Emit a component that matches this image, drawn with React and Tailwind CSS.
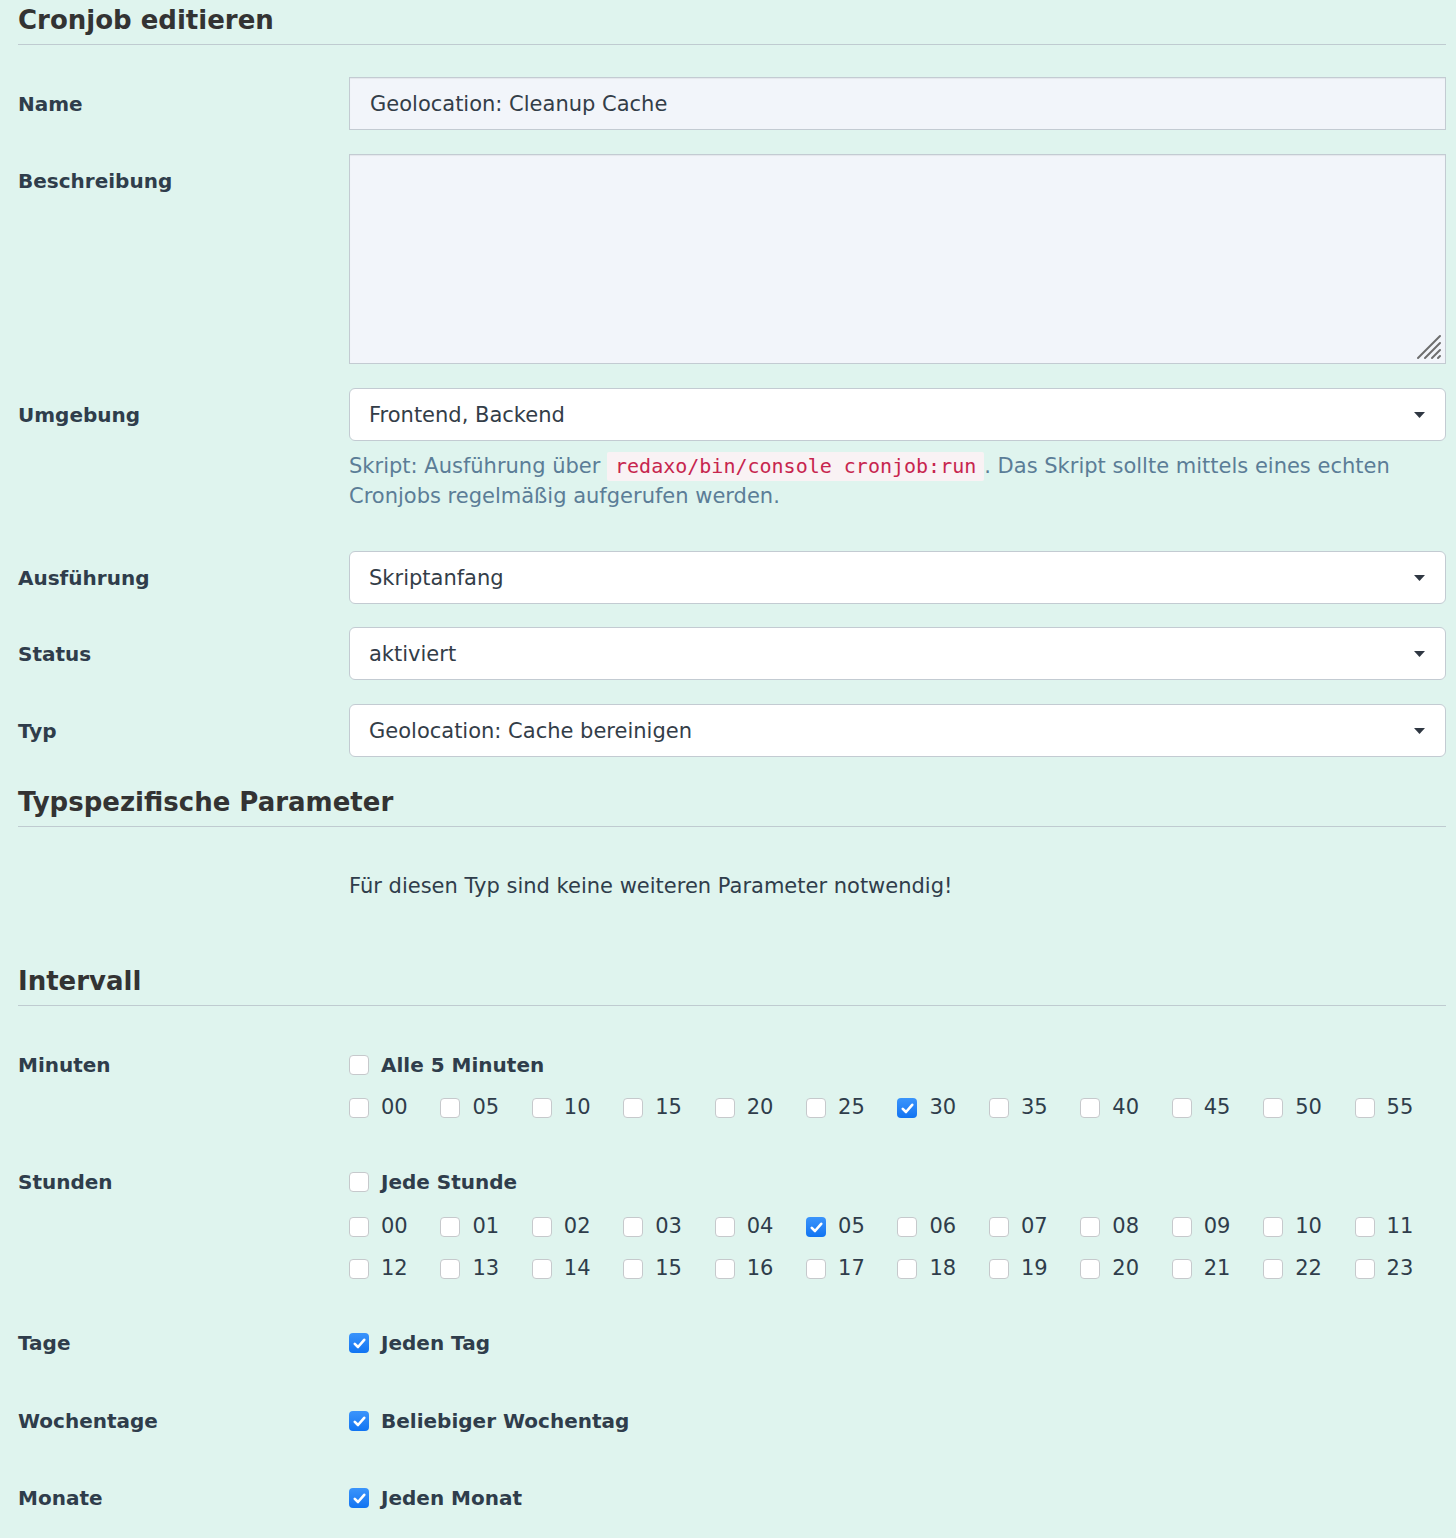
import React from 'react';

const font = { fontFamily: '"DejaVu Sans", Verdana, sans-serif' };

function Caret() {
  return (
    <svg width="11" height="6" viewBox="0 0 11 6" className="shrink-0">
      <path d="M0 0 L11 0 L5.5 6 Z" fill="#2f3742" />
    </svg>
  );
}

function Checkbox({ checked }) {
  if (checked) {
    return (
      <span className="w-[20px] h-[20px] shrink-0 rounded-[4px] bg-gradient-to-b from-[#3a94fb] to-[#0f74f2] flex items-center justify-center">
        <svg width="13" height="11" viewBox="0 0 13 11">
          <path d="M1.8 5.8 L5 9 L11.2 1.8" fill="none" stroke="white" strokeWidth="2.6" strokeLinecap="round" strokeLinejoin="round" />
        </svg>
      </span>
    );
  }
  return <span className="w-[20px] h-[20px] shrink-0 rounded-[4px] bg-white border border-[#c6c9cc]" />;
}

function Check({ label, checked, bold }) {
  return (
    <label className="flex items-center gap-[12px] h-[30px]">
      <Checkbox checked={checked} />
      <span className={bold ? 'text-[20px] font-bold text-[#2f3d4b]' : 'text-[21px] text-[#2f3d4b]'}>{label}</span>
    </label>
  );
}

function Label({ children, className = '' }) {
  return (
    <div className={`w-[331px] shrink-0 text-[20px] font-bold text-[#2f3d4b] ${className}`}>{children}</div>
  );
}

function Select({ value, className = 'flex-1' }) {
  return (
    <div className={`${className} h-[53px] shrink-0 bg-white border border-[#c3cbd2] rounded-[6px] flex items-center justify-between pl-[19px] pr-[20px] text-[21px] text-[#333d48]`}>
      <span className="pt-[2px]">{value}</span>
      <Caret />
    </div>
  );
}

function Heading({ children, className = '' }) {
  return (
    <h2 className={`text-[26px] font-bold text-[#333333] leading-[40px] pb-1 border-b border-[#bfcbd0] ${className}`}>
      {children}
    </h2>
  );
}

const minutes = ['00', '05', '10', '15', '20', '25', '30', '35', '40', '45', '50', '55'];
const hours = Array.from({ length: 24 }, (_, i) => String(i).padStart(2, '0'));

export default function App() {
  return (
    <div className="min-h-[1538px] bg-[#dff4ee] pl-[18px] pr-[10px] pb-[26px]" style={font}>
      <Heading>Cronjob editieren</Heading>

      {/* Name */}
      <div className="flex items-center mt-[32px]">
        <Label>Name</Label>
        <div className="flex-1 h-[53px] bg-[#f2f5fa] border border-[#c3cbd2] shadow-[inset_0_1px_1px_rgba(0,0,0,0.06)] flex items-center pl-[20px] pt-[2px] text-[21px] text-[#333d48]">
          Geolocation: Cleanup Cache
        </div>
      </div>

      {/* Beschreibung */}
      <div className="flex items-start mt-6">
        <Label className="pt-[12px] leading-[30px]">Beschreibung</Label>
        <div className="relative flex-1 h-[210px] bg-[#f2f5fa] border border-[#c3cbd2] shadow-[inset_0_1px_1px_rgba(0,0,0,0.06)]">
          <svg className="absolute right-[3px] bottom-[3px]" width="26" height="26" viewBox="0 0 26 26">
            <path d="M2 24 L24 2 M9 24 L24 9 M16 24 L24 16 M22 24 L24 22" stroke="#6e6e6e" strokeWidth="2" strokeLinecap="round" />
          </svg>
        </div>
      </div>

      {/* Umgebung */}
      <div className="flex items-start mt-6">
        <Label className="h-[53px] flex items-center">Umgebung</Label>
        <div className="flex-1 flex flex-col">
          <Select value="Frontend, Backend" className="w-full" />
          <p className="mt-[10px] text-[21px] leading-[30px] text-[#5b7d97]">
            <span>Skript: Ausführung über </span>
            <code
              className="inline-block bg-[#f9f2f4] text-[#c7254e] text-[20px] leading-[29px] px-[8px] rounded-[2px]"
              style={{ fontFamily: '"DejaVu Sans Mono", "Liberation Mono", monospace' }}
            >
              redaxo/bin/console cronjob:run
            </code>
            <span>. Das Skript sollte mittels eines echten</span>
            <br />
            <span>Cronjobs regelmäßig aufgerufen werden.</span>
          </p>
        </div>
      </div>

      <div className="flex items-center mt-[40px]">
        <Label>Ausführung</Label>
        <Select value="Skriptanfang" />
      </div>
      <div className="flex items-center mt-[23px]">
        <Label>Status</Label>
        <Select value="aktiviert" />
      </div>
      <div className="flex items-center mt-6">
        <Label>Typ</Label>
        <Select value="Geolocation: Cache bereinigen" />
      </div>

      <Heading className="mt-[25px]">Typspezifische Parameter</Heading>

      <div className="flex mt-[44px] leading-[30px]">
        <div className="w-[331px] shrink-0" />
        <p className="text-[21px] text-[#2f3d4b]">Für diesen Typ sind keine weiteren Parameter notwendig!</p>
      </div>

      <Heading className="mt-[60px]">Intervall</Heading>

      {/* Minuten */}
      <div className="flex items-start mt-[44px]">
        <Label className="leading-[30px]">Minuten</Label>
        <div className="flex-1">
          <Check label="Alle 5 Minuten" bold />
          <div className="grid grid-cols-12 mt-[13px]">
            {minutes.map((m) => (
              <Check key={m} label={m} checked={m === '30'} />
            ))}
          </div>
        </div>
      </div>

      {/* Stunden */}
      <div className="flex items-start mt-[44px]">
        <Label className="leading-[30px]">Stunden</Label>
        <div className="flex-1">
          <Check label="Jede Stunde" bold />
          <div className="grid grid-cols-12 gap-y-[12px] mt-[15px]">
            {hours.map((h) => (
              <Check key={h} label={h} checked={h === '05'} />
            ))}
          </div>
        </div>
      </div>

      <div className="flex items-start mt-[44px]">
        <Label className="leading-[30px]">Tage</Label>
        <Check label="Jeden Tag" bold checked />
      </div>
      <div className="flex items-start mt-[48px]">
        <Label className="leading-[30px]">Wochentage</Label>
        <Check label="Beliebiger Wochentag" bold checked />
      </div>
      <div className="flex items-start mt-[47px]">
        <Label className="leading-[30px]">Monate</Label>
        <Check label="Jeden Monat" bold checked />
      </div>
    </div>
  );
}
